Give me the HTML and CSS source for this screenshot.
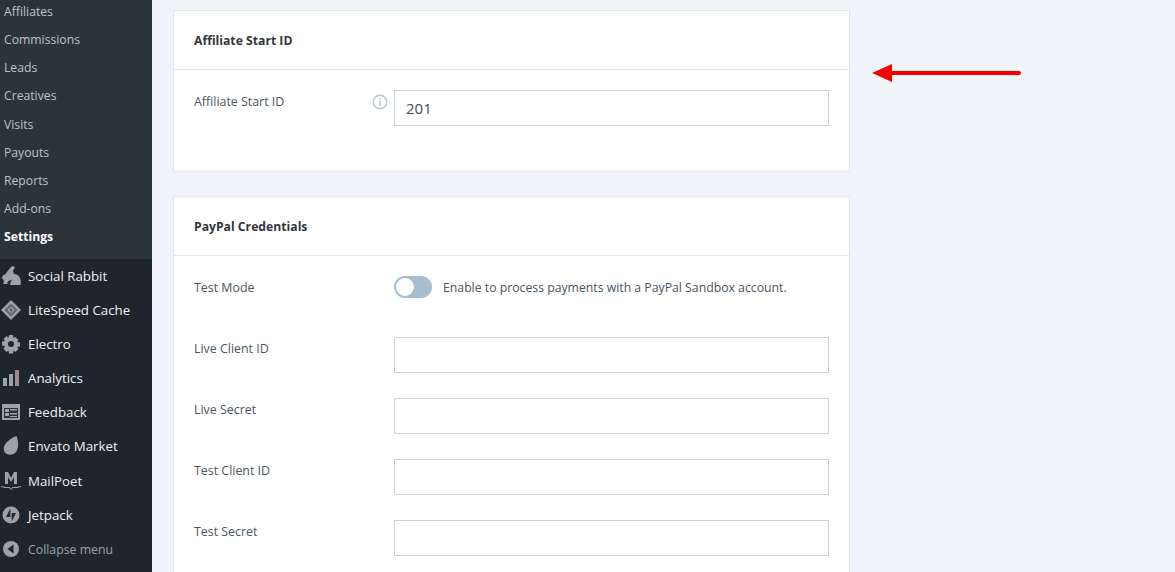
FILE: index.html
```html
<!DOCTYPE html>
<html>
<head>
  <title>Affiliate Settings</title>
  <link rel="stylesheet" href="styles.css">
</head>
<body>
  <div class="page">
    <nav class="sidebar">
      <ul class="submenu">
        <li>Affiliates</li>
        <li>Commissions</li>
        <li>Leads</li>
        <li>Creatives</li>
        <li>Visits</li>
        <li>Payouts</li>
        <li>Reports</li>
        <li>Add-ons</li>
        <li class="current">Settings</li>
      </ul>
      <ul class="menu">
        <li>
          <svg class="icon" viewBox="0 0 20 20"><path d="M11 0l3 1-2 4 1 3c3 0 6 2 6.500 6 .5 1 .5 3 0 5H9l-1-1H2l1-2-1-3-1.500-1 2-3 2-1 3-4z" fill="#9ca2a7"/><path d="M6 17c1-2 3-3 5-3-1 1-2 3-2 5z" fill="#1f262b"/></svg>
          Social Rabbit
        </li>
        <li>
          <svg class="icon" viewBox="0 0 20 20"><path d="M10 0l10 10-10 10L0 10z" fill="#9ca2a7"/><path d="M10 3.500l6.500 6.500-6.500 6.500L3.500 10z" fill="#5d646b"/><path d="M10 6l4 4-4 4-4-4z" fill="#8d9399"/><path d="M10.800 7l-2 3.300h1.400L9.200 13l2-3.300H9.800z" fill="#1f262b"/></svg>
          LiteSpeed Cache
        </li>
        <li>
          <svg class="icon" viewBox="0 0 20 20"><path d="M8 1h4l.5 3 2-1 3 3-1.500 2 3 .5v4l-3 .5 1.500 2-3 3-2-1.500-.5 3H8l-.5-3-2 1.500-3-3L4 12l-3-.5v-4L4 7 2.500 5l3-3 2 2z" fill="#9ca2a7"/><circle cx="10" cy="10" r="3" fill="#1f262b"/></svg>
          Electro
        </li>
        <li>
          <svg class="icon" viewBox="0 0 20 20"><path d="M2 10h4v8H2zM8 6h4v12H8z" fill="#9ca2a7"/><path d="M14 2h4v16h-4z" fill="#a08a8c"/></svg>
          Analytics
        </li>
        <li>
          <svg class="icon" viewBox="0 0 20 20"><path d="M1 2h18v16H1z" fill="#9ca2a7"/><path d="M3 6h14v10H3z" fill="#2c2f3a"/><path d="M4 7h4v3H4zM9 7h7v1.500H9zM4 11h4v3H4zM9 11h7v1.500H9zM9 14h7v1H9z" fill="#9ca2a7"/></svg>
          Feedback
        </li>
        <li>
          <svg class="icon" viewBox="0 0 20 20"><path d="M15.500 0c2 5 2.500 12-.5 16-3 3.500-8.500 3.500-11 .5-2.500-3.500-1-7.500 2-10.500 2.500-2.500 6-5 9.500-6z" fill="#9ca2a7"/></svg>
          Envato Market
        </li>
        <li>
          <svg class="icon icon-poet" viewBox="0 0 20 20"><path d="M4 1h3l3 6 3-6h3v12h-3V6l-3 5-3-5v7H4z" fill="#9ca2a7"/><path d="M0 15c3 1 6 1 8.500 1l1.500 2 1.500-2c2.500 0 5.500 0 8.500-1v1c-3 1-5 1-8 1l-2 2-2-2c-3 0-5 0-8-1z" fill="#9ca2a7"/></svg>
          MailPoet
        </li>
        <li>
          <svg class="icon" viewBox="0 0 20 20"><circle cx="10" cy="10" r="8.500" fill="#9ca2a7"/><path d="M9.400 3.500v8.500H5zM10.700 16.500V8H15z" fill="#1f262b"/></svg>
          Jetpack
        </li>
        <li class="collapse">
          <svg class="icon" viewBox="0 0 20 20"><circle cx="10" cy="10" r="8" fill="#9ca2a7"/><path d="M12.500 5.500v9l-6-4.500z" fill="#1f262b"/></svg>
          Collapse menu
        </li>
      </ul>
    </nav>

    <main class="content">
      <section class="card card-short">
        <h2 class="card-title">Affiliate Start ID</h2>
        <div class="card-body">
          <div class="field">
            <label class="field-label">Affiliate Start ID</label>
            <svg class="info" viewBox="0 0 16 16"><circle cx="8" cy="8" r="6.700" fill="none" stroke="#b5c7d6" stroke-width="1.400"/><path d="M7.200 4h1.600v1.600H7.200zM7.200 7h1.600v5H7.200z" fill="#b5c7d6"/></svg>
            <input class="text-input value-input" type="text" value="201">
          </div>
        </div>
      </section>

      <section class="card">
        <h2 class="card-title">PayPal Credentials</h2>
        <div class="card-body">
          <div class="field field-toggle">
            <label class="field-label">Test Mode</label>
            <span class="toggle"><span class="knob"></span></span>
            <span class="hint">Enable to process payments with a PayPal Sandbox account.</span>
          </div>
          <div class="field">
            <label class="field-label">Live Client ID</label>
            <input class="text-input" type="text">
          </div>
          <div class="field">
            <label class="field-label">Live Secret</label>
            <input class="text-input" type="text">
          </div>
          <div class="field">
            <label class="field-label">Test Client ID</label>
            <input class="text-input" type="text">
          </div>
          <div class="field">
            <label class="field-label">Test Secret</label>
            <input class="text-input" type="text">
          </div>
        </div>
      </section>
    </main>

    <svg class="arrow" viewBox="0 0 150 18" width="150" height="18">
      <path d="M0 9l20-9v7h127a2 2 0 0 1 0 4H20v7z" fill="#f80000"/>
    </svg>
  </div>
</body>
</html>
```

FILE: styles.css
```css
* {
  box-sizing: border-box;
}
html, body {
  margin: 0;
  height: 572px;
  overflow: hidden;
}
body {
  font-family: "Open Sans", "Noto Sans", sans-serif;
  background: #f1f4f8;
}
.page {
  display: flex;
  height: 572px;
  position: relative;
}
.sidebar {
  width: 152px;
  flex: none;
  background: #1f262b;
  overflow: hidden;
}
ul {
  list-style: none;
  margin: 0;
  padding: 0;
}
.submenu {
  background: #2c343b;
  margin-top: -3.200px;
  height: 262.200px;
}
.submenu li {
  height: 28.200px;
  line-height: 29px;
  padding-left: 4px;
  font-size: 12.200px;
  color: #bcc3c9;
}
.submenu .current {
  color: #fff;
  font-weight: 700;
}
.menu li {
  display: flex;
  align-items: center;
  height: 34.080px;
  font-size: 13.300px;
  color: #eef0f2;
}
.icon {
  width: 20px;
  height: 20px;
  flex: none;
  margin: 0 7px 0 1px;
}
.menu .collapse {
  color: #9ca2a7;
  font-size: 12.300px;
  padding-top: 1px;
}
.content {
  width: 677px;
  margin-left: 21px;
  padding-top: 10px;
  display: flex;
  flex-direction: column;
  gap: 24px;
}
.card {
  background: #fff;
  border: 1px solid #dfe6ec;
  flex: none;
}
.card-short {
  height: 162px;
}
.card-title {
  margin: 0;
  height: 59px;
  line-height: 60px;
  padding-left: 20px;
  font-size: 12.200px;
  font-weight: 700;
  color: #32373c;
  border-bottom: 1px solid #e3e9ee;
}
.card-body {
  padding: 20px 20px 0;
}
.field {
  display: flex;
  align-items: flex-start;
  margin-bottom: 25px;
  position: relative;
}
.field-label {
  width: 200px;
  flex: none;
  font-size: 12.400px;
  color: #4a5561;
  line-height: 24px;
}
.text-input {
  width: 435px;
  height: 36px;
  border: 1px solid #c5d3df;
  background: #fff;
  padding: 0 11px;
  font-family: inherit;
  font-size: 15px;
  color: #3d4a5c;
  border-radius: 0;
  outline: none;
}
.info {
  position: absolute;
  left: 178px;
  top: 4px;
  width: 16px;
  height: 16px;
}
.field-toggle {
  align-items: center;
  margin-top: -1px;
  margin-bottom: 37px;
}
.field-toggle .field-label {
  padding-top: 1px;
}
.toggle {
  width: 38px;
  height: 22px;
  border-radius: 11px;
  background: #a9bdd0;
  padding: 2px;
  flex: none;
  display: flex;
  align-self: flex-start;
  margin-top: 1px;
}
.knob {
  width: 18px;
  height: 18px;
  border-radius: 50%;
  background: #fff;
}
.hint {
  margin-left: 11px;
  font-size: 12.250px;
  color: #4a5561;
}
.arrow {
  position: absolute;
  left: 872px;
  top: 64px;
}
```
